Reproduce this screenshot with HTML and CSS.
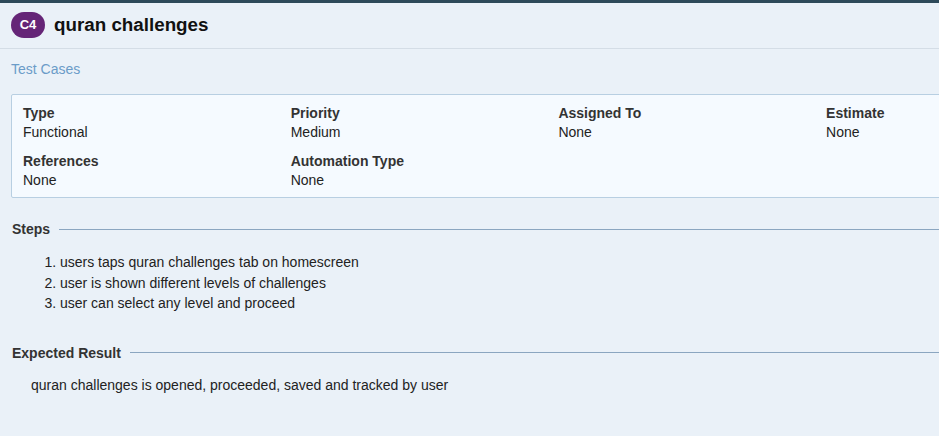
FILE: index.html
```html
<!DOCTYPE html>
<html>
<head>
<meta charset="utf-8">
<link rel="stylesheet" href="styles.css">
</head>
<body>
<div class="page">
  <header class="header">
    <span class="badge">C4</span>
    <h1 class="title">quran challenges</h1>
  </header>
  <div class="content">
    <a class="crumb" href="#">Test Cases</a>
    <div class="props">
      <div class="prop"><div class="label">Type</div><div class="value">Functional</div></div>
      <div class="prop"><div class="label">Priority</div><div class="value">Medium</div></div>
      <div class="prop"><div class="label">Assigned To</div><div class="value">None</div></div>
      <div class="prop"><div class="label">Estimate</div><div class="value">None</div></div>
      <div class="prop"><div class="label">References</div><div class="value">None</div></div>
      <div class="prop"><div class="label">Automation Type</div><div class="value">None</div></div>
    </div>
    <section class="section steps">
      <h2 class="sec-head"><span>Steps</span></h2>
      <ol class="step-list">
        <li>users taps quran challenges tab on homescreen</li>
        <li>user is shown different levels of challenges</li>
        <li>user can select any level and proceed</li>
      </ol>
    </section>
    <section class="section expected">
      <h2 class="sec-head"><span>Expected Result</span></h2>
      <p class="result">quran challenges is opened, proceeded, saved and tracked by user</p>
    </section>
  </div>
</div>
</body>
</html>
```

FILE: styles.css
```css
html, body {
  margin: 0;
  padding: 0;
  overflow: hidden;
}
body {
  background: #eaf1f8;
  font-family: "Liberation Sans", Arial, sans-serif;
  color: #222;
  width: 939px;
  height: 436px;
}
.page {
  border-top: 3px solid #2e4a5a;
}
.header {
  display: flex;
  align-items: center;
  height: 46px;
  padding-left: 11px;
  border-bottom: 1px solid #d4dde6;
  box-sizing: border-box;
}
.badge {
  display: inline-flex;
  align-items: center;
  justify-content: center;
  width: 34px;
  height: 26px;
  border-radius: 13px;
  background: #652577;
  color: #fff;
  font-weight: bold;
  font-size: 13px;
  margin-right: 9px;
  margin-top: -2px;
}
.title {
  margin: 0;
  font-size: 18.8px;
  font-weight: bold;
  color: #111;
  margin-top: -2px;
}
.content {
  padding: 0 0 0 11px;
}
.crumb {
  display: block;
  color: #6b9cc8;
  text-decoration: none;
  font-size: 14px;
  margin-top: 12px;
  line-height: 16px;
}
.props {
  margin-top: 17px;
  width: 1100px;
  border: 1px solid #b8cfe2;
  border-radius: 2px;
  background: #f5faff;
  display: grid;
  grid-template-columns: repeat(4, 267.7px);
  row-gap: 11px;
  padding: 9px 11px 8px 11px;
  box-sizing: border-box;
}
.label {
  font-weight: bold;
  font-size: 14px;
  line-height: 18px;
  color: #333;
}
.value {
  font-size: 14px;
  line-height: 18px;
  margin-top: 1px;
  color: #222;
}
.section {
  margin-top: 22px;
}
.sec-head {
  display: flex;
  align-items: center;
  margin: 0;
  font-size: 14px;
  font-weight: bold;
  color: #333;
  line-height: 18px;
  padding-left: 1px;
}
.sec-head::after {
  content: "";
  flex: 1;
  height: 1px;
  background: #8ba6c0;
  margin-left: 9px;
}
.step-list {
  margin: 14px 0 0 0;
  padding-left: 49px;
  font-size: 14px;
  line-height: 20.5px;
  color: #222;
}
.expected {
  margin-top: 30px;
}
.result {
  margin: 13px 0 0 20px;
  font-size: 14px;
  line-height: 20px;
  color: #222;
}
```
